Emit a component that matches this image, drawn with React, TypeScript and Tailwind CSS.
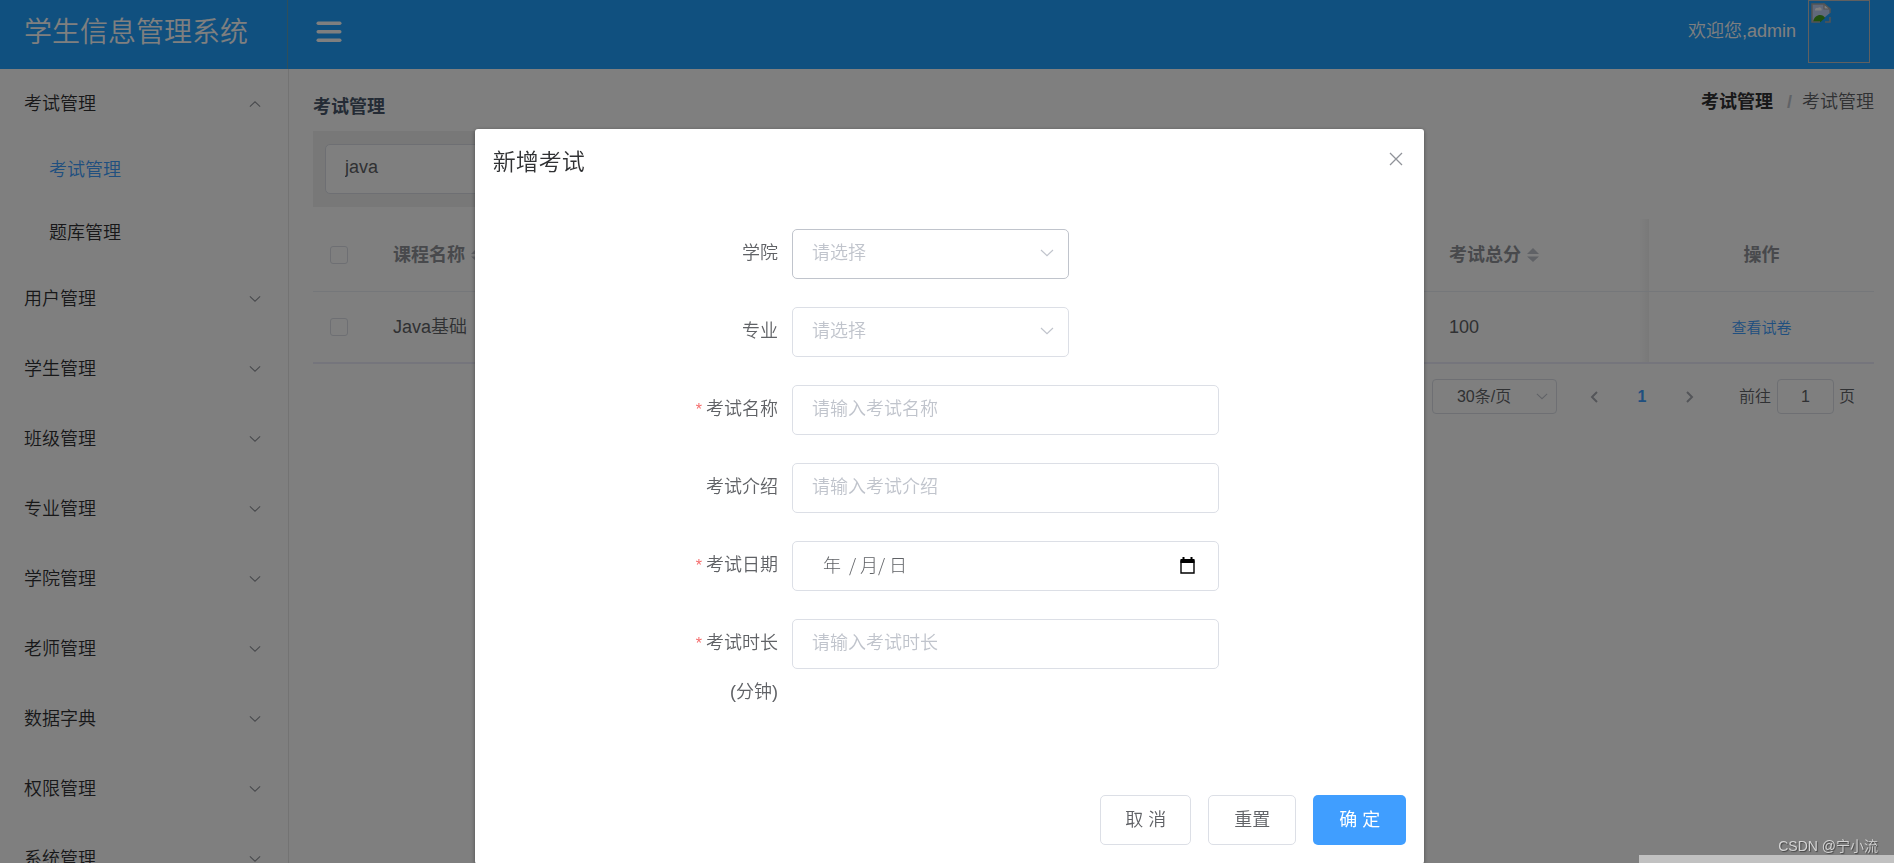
import { ReactNode } from 'react';

const menus = [
  { name: '考试管理', open: true, children: ['考试管理', '题库管理'] },
  { name: '用户管理' },
  { name: '学生管理' },
  { name: '班级管理' },
  { name: '专业管理' },
  { name: '学院管理' },
  { name: '老师管理' },
  { name: '数据字典' },
  { name: '权限管理' },
  { name: '系统管理' },
];

const Arrow = ({ className = '' }: { className?: string }) => (
  <svg viewBox="0 0 14 8" fill="none" stroke="currentColor" className={className}>
    <path d="M1 1l6 5.6L13 1" strokeWidth="1.2" />
  </svg>
);

// broken avatar placeholder
const BrokenImage = () => (
  <svg viewBox="0 0 20 20" className="size-5">
    <path d="M1 1h12l6 5v4L8 19H1z" fill="#c3d3f5" />
    <path d="M4 7.500a2.200 2.200 0 0 1 3-2.500 2.200 2.200 0 0 1 3.500 2.500z" fill="#fff" />
    <path d="M2 19c1-8 10-9 12-4l-4.500 4z" fill="#44a01c" />
    <path d="M19 10V6l-6-5H1v18h8M19 14v5h-5" fill="none" stroke="#a8a8a8" strokeWidth="1.5" />
    <path d="M13 1v5h6z" fill="#fff" stroke="#a8a8a8" strokeWidth="1.2" />
  </svg>
);

const Header = () => (
  <header className="flex h-[69px] shrink-0 items-start bg-[#20a0ff] text-white">
    <h1 className="h-full w-[288px] border-r border-[#5c9fb8] pl-6 text-[28px] leading-[66px]">
      学生信息管理系统
    </h1>
    <button type="button" aria-label="折叠菜单" className="ml-7 flex h-[64px] items-center">
      <svg viewBox="0 0 26 22" className="h-[22px] w-[26px]" fill="currentColor">
        <rect x="0.5" y="0.5" width="25" height="3.500" rx="1.700" />
        <rect x="0.5" y="9" width="25" height="3.500" rx="1.700" />
        <rect x="0.5" y="17.500" width="25" height="3.500" rx="1.700" />
      </svg>
    </button>
    <div className="ml-auto flex items-start gap-3 pr-6">
      <span className="text-lg leading-[62px]">欢迎您,admin</span>
      <div className="h-[63px] w-[62px] border border-[#c0c0c0] p-0.5">
        <BrokenImage />
      </div>
    </div>
  </header>
);

const Sidebar = () => (
  <nav className="w-[289px] shrink-0 overflow-hidden border-r border-[#e6e6e6] text-lg text-[#303133]">
    <ul>
      {menus.map((menu) => (
        <li key={menu.name}>
          <button type="button" className="flex h-[70px] w-full items-center justify-between pr-[27px] pl-6">
            <span>{menu.name}</span>
            <Arrow className={menu.open ? 'h-2 w-3 rotate-180 text-[#909399]' : 'h-2 w-3 text-[#909399]'} />
          </button>
          {menu.children && (
            <ul>
              {menu.children.map((child, i) => (
                <li key={child}>
                  <a
                    href="#"
                    className={
                      i === 0
                        ? 'flex h-[62px] items-center pl-[49px] text-[#409eff]'
                        : 'flex h-[63px] items-center pl-[49px]'
                    }
                  >
                    {child}
                  </a>
                </li>
              ))}
            </ul>
          )}
        </li>
      ))}
    </ul>
  </nav>
);

const Checkbox = ({ label }: { label: string }) => (
  <input
    type="checkbox"
    aria-label={label}
    className="block size-[18px] appearance-none rounded-[3px] border border-[#dcdfe6] bg-white"
  />
);

const SortCaret = () => (
  <svg viewBox="0 0 12 16" className="h-4 w-3" fill="#c0c4cc">
    <path d="M6 1l6 6H0z" />
    <path d="M6 15l6-5.500H0z" />
  </svg>
);

const ExamTable = () => (
  <table className="mt-3 w-full table-fixed border-separate border-spacing-0 text-left text-lg text-[#606266]">
    <colgroup>
      <col className="w-[68px]" />
      <col />
      <col className="w-[212px]" />
      <col className="w-[225px]" />
    </colgroup>
    <thead className="text-[#909399]">
      <tr>
        <th className="h-[73px] border-b border-[#ebeef5] pl-[17px]">
          <Checkbox label="全选" />
        </th>
        <th className="border-b border-[#ebeef5] pl-3 font-bold">
          <span className="flex items-center gap-1.5">
            课程名称 <SortCaret />
          </span>
        </th>
        <th className="border-b border-[#ebeef5] bg-linear-to-l from-black/5 to-transparent bg-[length:10px_100%] bg-right bg-no-repeat pl-3 font-bold">
          <span className="flex items-center gap-1.5">
            考试总分 <SortCaret />
          </span>
        </th>
        <th className="border-b border-[#ebeef5] text-center font-bold">操作</th>
      </tr>
    </thead>
    <tbody>
      <tr>
        <td className="h-[72px] border-b-2 border-[#ebebf8] pl-[17px]">
          <Checkbox label="选择 Java基础" />
        </td>
        <td className="border-b-2 border-[#ebebf8] pl-3">Java基础</td>
        <td className="border-b-2 border-[#ebebf8] bg-linear-to-l from-black/5 to-transparent bg-[length:10px_100%] bg-right bg-no-repeat pl-3">
          100
        </td>
        <td className="border-b-2 border-[#ebebf8] text-center">
          <a href="#" className="text-[15px] text-[#409eff]">
            查看试卷
          </a>
        </td>
      </tr>
    </tbody>
  </table>
);

const Pagination = () => (
  <div className="mt-[15px] flex h-[35px] items-center justify-end pr-[19px] text-base text-[#606266]">
    <div className="relative mr-[13px]">
      <select
        aria-label="每页条数"
        className="h-[35px] w-[125px] appearance-none rounded border border-[#dcdfe6] bg-white pl-6 text-[#606266]"
      >
        <option>30条/页</option>
      </select>
      <Arrow className="pointer-events-none absolute top-[14px] right-[9px] h-[7px] w-3 text-[#c0c4cc]" />
    </div>
    <button type="button" aria-label="上一页" className="flex w-12 justify-center text-[#a8abb2]">
      <svg viewBox="0 0 8 12" className="h-3 w-2" fill="none" stroke="currentColor" strokeWidth="2">
        <path d="M7 1L2 6l5 5" />
      </svg>
    </button>
    <button type="button" className="w-12 font-bold text-[#409eff]">
      1
    </button>
    <button type="button" aria-label="下一页" className="flex w-12 justify-center text-[#a8abb2]">
      <svg viewBox="0 0 8 12" className="h-3 w-2" fill="none" stroke="currentColor" strokeWidth="2">
        <path d="M1 1l5 5-5 5" />
      </svg>
    </button>
    <label htmlFor="jump" className="mr-1.5 ml-[25px]">
      前往
    </label>
    <input
      id="jump"
      defaultValue="1"
      className="mr-[5px] h-[35px] w-[57px] rounded border border-[#dcdfe6] bg-white text-center"
    />
    <span>页</span>
  </div>
);

const Content = () => (
  <main className="min-w-0 flex-1 pr-5 pl-6">
    <div className="flex h-[62px] items-start justify-between text-lg">
      <h2 className="mt-7 leading-5 font-bold text-[#48576a]">考试管理</h2>
      <div className="mt-[23px] flex leading-5 text-[#606266]">
        <a href="#" className="font-bold text-[#303133]">
          考试管理
        </a>
        <span className="mr-2.5 ml-3.5 font-bold text-[#c0c4cc]">/</span>
        <span>考试管理</span>
      </div>
    </div>
    <div className="w-3/5 bg-[#f0f0f0] px-3 py-[13px]">
      <input
        aria-label="搜索课程"
        defaultValue="java"
        className="block h-[50px] w-64 rounded-[5px] border border-[#dcdfe6] bg-white px-[19px] pb-1 text-lg text-[#606266]"
      />
    </div>
    <ExamTable />
    <Pagination />
  </main>
);

type FieldProps = {
  id: string;
  label: string;
  required?: boolean;
  children: ReactNode;
};

const Field = ({ id, label, required, children }: FieldProps) => (
  <div className="flex items-start">
    <label htmlFor={id} className="w-28 pr-[14px] text-right leading-[49px] text-[#606266]">
      {required && <span className="mr-1 text-base text-[#f56c6c]">*</span>}
      {label}
    </label>
    {children}
  </div>
);

const inputClass =
  'h-[50px] w-[427px] rounded-[5px] border border-[#dcdfe6] bg-white px-[19px] pb-0.5 placeholder:text-[#c0c4cc]';

const SelectBox = ({ id, className }: { id: string; className: string }) => (
  <div className="relative">
    <select
      id={id}
      className={`h-[50px] w-[277px] appearance-none rounded-[5px] border bg-white pb-0.5 pl-[19px] text-[#c0c4cc] ${className}`}
    >
      <option>请选择</option>
    </select>
    <Arrow className="pointer-events-none absolute top-5 right-[15px] h-2 w-[14px] text-[#c0c4cc]" />
  </div>
);

const ExamDialog = () => (
  <div className="fixed inset-0 -right-[5px] bg-black/50 pt-[129px]">
    <div
      role="dialog"
      aria-label="新增考试"
      className="mx-auto w-1/2 rounded-[3px] bg-white px-[18px] pb-[19px] text-lg shadow-[0_1px_4px_rgba(0,0,0,0.4)]"
    >
      <div className="flex h-[100px] items-start justify-between pt-[18px]">
        <h3 className="text-[23px] leading-[30px] text-[#303133]">新增考试</h3>
        <button type="button" aria-label="关闭" className="mt-[5px] mr-[3px] text-[#909399]">
          <svg viewBox="0 0 14 14" className="size-[14px]" fill="none" stroke="currentColor" strokeWidth="1.3">
            <path d="M1 1l12 12M13 1L1 13" />
          </svg>
        </button>
      </div>

      <form className="mx-auto flex w-fit flex-col gap-7">
        <Field id="college" label="学院">
          <SelectBox id="college" className="border-[#c0c4cc]" />
        </Field>
        <Field id="major" label="专业">
          <SelectBox id="major" className="border-[#dcdfe6]" />
        </Field>
        <Field id="name" label="考试名称" required>
          <input id="name" placeholder="请输入考试名称" className={inputClass} />
        </Field>
        <Field id="intro" label="考试介绍">
          <input id="intro" placeholder="请输入考试介绍" className={inputClass} />
        </Field>
        <Field id="date" label="考试日期" required>
          <div className="relative">
            <input
              id="date"
              defaultValue="年  / 月/ 日"
              className="h-[50px] w-[427px] rounded-[5px] border border-[#dcdfe6] bg-white pb-1 pl-[30px] font-['Noto_Sans_CJK_SC',sans-serif] font-light text-[#606266]"
            />
            <svg viewBox="0 0 15 17" className="absolute top-4 right-6 h-[17px] w-[15px]">
              <path d="M1 4h13v12H1z" fill="none" stroke="#000" strokeWidth="1.4" />
              <path d="M0.500 2h14v4H0.500zM2.500 0h2v3h-2zM10.500 0h2v3h-2z" />
            </svg>
          </div>
        </Field>
        <Field id="duration" label="考试时长(分钟)" required>
          <input id="duration" placeholder="请输入考试时长" className={inputClass} />
        </Field>
      </form>

      <div className="mt-[78px] flex justify-end gap-[17px] text-[#606266]">
        <button type="button" className="h-[50px] rounded-[5px] border border-[#dcdfe6] px-6">
          取 消
        </button>
        <button type="button" className="h-[50px] rounded-[5px] border border-[#dcdfe6] px-[25px]">
          重置
        </button>
        <button type="button" className="h-[50px] rounded-[5px] bg-[#409eff] px-[26px] font-normal text-white">
          确 定
        </button>
      </div>
    </div>
  </div>
);

export default function App() {
  return (
    <div className="relative flex h-screen flex-col overflow-hidden bg-white font-['Liberation_Sans','Noto_Sans_CJK_SC',sans-serif] font-[350]">
      <Header />
      <div className="flex min-h-0 flex-1">
        <Sidebar />
        <Content />
      </div>
      <ExamDialog />
      <div className="absolute right-0 bottom-0 h-2 w-[255px] bg-[#c1c1c1]" />
      <span className="absolute right-4 bottom-2 text-sm leading-[18px] text-[#d4d4d4] [text-shadow:1px_1px_1px_#444]">
        CSDN @宁小流
      </span>
    </div>
  );
}
